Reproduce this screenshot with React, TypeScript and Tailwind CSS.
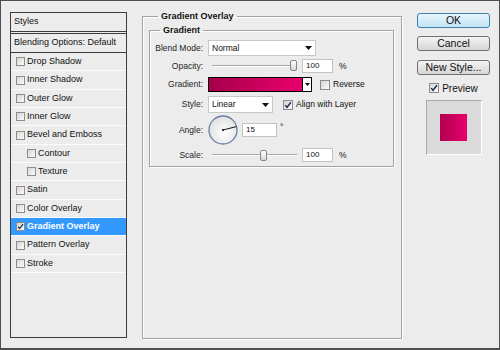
import React from 'react'

interface StyleItem {
  label: string
  sub?: boolean
  checked?: boolean
  active?: boolean
}

const ITEMS: StyleItem[] = [
  { label: 'Drop Shadow' },
  { label: 'Inner Shadow' },
  { label: 'Outer Glow' },
  { label: 'Inner Glow' },
  { label: 'Bevel and Emboss' },
  { label: 'Contour', sub: true },
  { label: 'Texture', sub: true },
  { label: 'Satin' },
  { label: 'Color Overlay' },
  { label: 'Gradient Overlay', checked: true, active: true },
  { label: 'Pattern Overlay' },
  { label: 'Stroke' },
]

function Check({ checked = false, big = false }: { checked?: boolean; big?: boolean }) {
  return (
    <span
      className={`${big ? 'w-[10px] h-[10px]' : 'w-[9px] h-[9px]'} shrink-0 border border-[#8c8c8c] bg-gradient-to-br from-[#d6d6d6] to-[#fbfbfb] flex items-center justify-center`}
    >
      {checked && (
        <svg viewBox="0 0 8 8" className="w-full h-full">
          <path d="M1.2 4.1 L3 6.3 L6.9 1.2" fill="none" stroke="#1f2c4f" strokeWidth="1.4" />
        </svg>
      )}
    </span>
  )
}

function Arrow() {
  return (
    <svg width="7" height="4" viewBox="0 0 7 4" className="shrink-0">
      <path d="M0 0 H7 L3.5 4 Z" fill="#111" />
    </svg>
  )
}

function Label({ children }: { children: React.ReactNode }) {
  return <span className="w-[53px] shrink-0 text-right text-[8.5px] text-[#1e1e1e]">{children}</span>
}

function Field({ value, width = 'w-[31px]' }: { value: string; width?: string }) {
  return (
    <div className={`${width} h-[14px] bg-white border border-[#c4c4c4] pl-[3px] flex items-center text-[8px]`}>
      {value}
    </div>
  )
}

function Slider({ knob, top }: { knob: number; top: string }) {
  return (
    <div className="relative ml-[9px] w-[85px] h-full flex items-center">
      <div className="w-full h-[2px] bg-[#a9a9a9] border-b border-white" />
      <div
        className={`absolute ${top} w-[7px] h-[11px] rounded-[2px] border border-[#868686] bg-gradient-to-b from-white to-[#d6d6d6]`}
        style={{ left: knob }}
      />
    </div>
  )
}

function Select({ value, width }: { value: string; width: string }) {
  return (
    <div
      className={`ml-[5px] ${width} h-full bg-white border border-[#c8c8c8] pl-[3px] pr-[3px] flex items-center justify-between text-[8.5px]`}
    >
      <span>{value}</span>
      <Arrow />
    </div>
  )
}

function Dial() {
  return (
    <svg width="30" height="30" viewBox="0 0 30 30" className="ml-[5px] shrink-0">
      <defs>
        <radialGradient id="dialFill" cx="0.55" cy="0.6" r="0.6">
          <stop offset="0" stopColor="#ffffff" />
          <stop offset="1" stopColor="#e0e0e0" />
        </radialGradient>
      </defs>
      <circle cx="15" cy="15" r="14" fill="url(#dialFill)" stroke="#6b7ea6" strokeWidth="1.3" />
      <line x1="15" y1="15" x2="28.4" y2="11.6" stroke="#111" strokeWidth="1" />
      <circle cx="15" cy="15" r="1.1" fill="#111" />
    </svg>
  )
}

export default function App() {
  return (
    <div className="w-[500px] h-[350px] overflow-hidden bg-[#ececec] border border-b-2 border-[#4e4e4e] flex items-start font-['Liberation_Sans',Arial,sans-serif] text-[#111]">
      {/* Styles list */}
      <div className="ml-[9px] mt-[11px] w-[117px] h-[326px] border border-[#3d3d3d] flex flex-col">
        <div className="h-[19px] shrink-0 border-b border-[#3d3d3d] pl-[3px] flex items-center text-[9px]">Styles</div>
        <div className="h-px shrink-0" />
        <div className="h-[20px] shrink-0 border-y border-[#3d3d3d] pl-[3px] flex items-center text-[9px]">
          Blending Options: Default
        </div>
        {ITEMS.map((it) => (
          <div
            key={it.label}
            className={`h-[18.35px] shrink-0 border-b border-[#fbfbfb] flex items-center gap-[2px] text-[9px] ${
              it.sub ? 'pl-[16px]' : 'pl-[5px]'
            } ${it.active ? 'bg-[#3399ff] text-white font-bold' : ''}`}
          >
            <Check checked={it.checked} />
            <span>{it.label}</span>
          </div>
        ))}
      </div>

      {/* Gradient Overlay group */}
      <fieldset className="ml-[15px] mt-[9px] w-[260px] h-[329px] border border-[#a2a2a2] shadow-[1px_1px_0_#fff,inset_1px_1px_0_#fff] pl-[6px] pt-[2px]">
        <legend className="ml-[9px] px-[3px] text-[9px] leading-[12px] font-bold">Gradient Overlay</legend>

        <fieldset className="w-[245px] border border-[#a2a2a2] shadow-[1px_1px_0_#fff,inset_1px_1px_0_#fff] pt-[4px] pb-[4px]">
          <legend className="ml-[10px] px-[3px] text-[9px] leading-[12px] font-bold">Gradient</legend>

          <div className="flex flex-col">
            <div className="h-[16px] flex items-center">
              <Label>Blend Mode:</Label>
              <Select value="Normal" width="w-[108px]" />
            </div>

            <div className="mt-[3px] h-[14px] flex items-center">
              <Label>Opacity:</Label>
              <Slider knob={78} top="top-[1px]" />
              <div className="ml-[5px]">
                <Field value="100" />
              </div>
              <span className="ml-[6px] text-[8.5px]">%</span>
            </div>

            <div className="mt-[4px] h-[15px] flex items-center">
              <Label>Gradient:</Label>
              <div className="ml-[5px] w-[104px] h-full border border-black flex">
                <div className="flex-1 bg-gradient-to-r from-[#a6004a] to-[#ea006e]" />
                <div className="w-[9px] border-l border-black bg-white flex items-center justify-center">
                  <svg width="5" height="3" viewBox="0 0 5 3">
                    <path d="M0 0 H5 L2.5 3 Z" fill="#111" />
                  </svg>
                </div>
              </div>
              <span className="ml-[8px]">
                <Check big />
              </span>
              <span className="ml-[3px] text-[8.5px]">Reverse</span>
            </div>

            <div className="mt-[4px] h-[17px] flex items-center">
              <Label>Style:</Label>
              <Select value="Linear" width="w-[65px]" />
              <span className="ml-[10px]">
                <Check big checked />
              </span>
              <span className="ml-[3px] text-[8.5px]">Align with Layer</span>
            </div>

            <div className="mt-[2px] h-[30px] flex items-center">
              <Label>Angle:</Label>
              <Dial />
              <div className="ml-[4px]">
                <Field value="15" width="w-[35px]" />
              </div>
              <span className="ml-[3px] text-[8.5px] -mt-[6px]">°</span>
            </div>

            <div className="mt-[3px] h-[14px] flex items-center">
              <Label>Scale:</Label>
              <Slider knob={48} top="top-[2px]" />
              <div className="ml-[5px]">
                <Field value="100" />
              </div>
              <span className="ml-[6px] text-[8.5px]">%</span>
            </div>
          </div>
        </fieldset>
      </fieldset>

      {/* Buttons and preview */}
      <div className="ml-[15px] mt-[12px] w-[73px] flex flex-col items-center text-[10.5px]">
        <button className="w-full h-[15px] rounded-[3px] border border-[#3c7fb1] bg-gradient-to-b from-[#e8f5fc] to-[#c2e4f6] leading-none flex items-center justify-center">
          OK
        </button>
        <button className="mt-[8px] w-full h-[15px] rounded-[3px] border border-[#707070] bg-gradient-to-b from-[#f3f3f3] to-[#d6d6d6] leading-none flex items-center justify-center">
          Cancel
        </button>
        <button className="mt-[9px] w-full h-[15px] rounded-[3px] border border-[#707070] bg-gradient-to-b from-[#f3f3f3] to-[#d6d6d6] leading-none flex items-center justify-center">
          New Style...
        </button>
        <div className="mt-[8px] h-[10px] flex items-center gap-[3px] text-[10px]">
          <Check big checked />
          <span>Preview</span>
        </div>
        <div className="mt-[7px] w-[56px] h-[55px] border border-t-[#a8a8a8] border-l-[#a8a8a8] border-r-white border-b-white bg-[#dadada] flex items-center justify-center">
          <div className="w-[27px] h-[27px] bg-gradient-to-r from-[#b0004f] to-[#e8006d]" />
        </div>
      </div>
    </div>
  )
}
